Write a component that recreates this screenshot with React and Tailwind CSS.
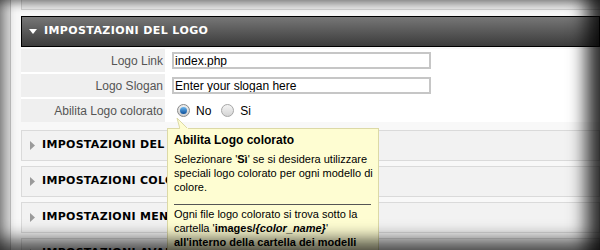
export default function App() {
  const label = "text-right pr-[2px] text-[12px] text-[#555] bg-[#efefef] w-[144px] shrink-0 flex items-center justify-end";
  const sections = ["IMPOSTAZIONI DEL LAYOUT", "IMPOSTAZIONI COLORE", "IMPOSTAZIONI MENU", "IMPOSTAZIONI AVANZATE"];

  return (
    <div className="relative w-[600px] h-[250px] overflow-hidden bg-[#e2e2e2] font-['Liberation_Sans',Arial,sans-serif]">
      <div className="ml-[10px] h-full border-l border-[#c6c6c6] bg-[#f8f8f8] pl-[10px]">
        <div className="h-[10px] bg-[#ececec] border-l border-b border-[#d2d2d2]" />

        <div className="mt-[6px] h-[31px] flex items-center gap-[7px] pl-[7px] border border-black bg-gradient-to-b from-[#777] to-[#3c3c3c]">
          <svg width="8" height="5" viewBox="0 0 8 5" className="fill-white">
            <path d="M0 0H8L4 5Z" />
          </svg>
          <span className="text-white font-bold text-[11px] tracking-[0.4px] font-['DejaVu_Sans',Verdana,sans-serif]">
            IMPOSTAZIONI DEL LOGO
          </span>
        </div>

        <div className="mt-[2px] flex flex-col gap-[2px] bg-white">
          <div className="flex h-[23px] items-center">
            <div className={label + " h-full"}>Logo Link</div>
            <input
              readOnly
              value="index.php"
              className="ml-[7px] w-[259px] h-[17px] border-2 border-[#c6c6c6] px-[1px] text-[12px] text-black outline-none"
            />
          </div>
          <div className="flex h-[23px] items-center">
            <div className={label + " h-full"}>Logo Slogan</div>
            <input
              readOnly
              value="Enter your slogan here"
              className="ml-[7px] w-[259px] h-[17px] border-2 border-[#c6c6c6] px-[1px] text-[12px] text-black outline-none"
            />
          </div>
          <div className="flex h-[23px] items-center">
            <div className={label + " h-full"}>Abilita Logo colorato</div>
            <div className="ml-[12px] flex items-center text-[12px] text-black">
              <span className="w-[13px] h-[13px] rounded-full border border-[#8a8a8a] bg-gradient-to-b from-[#eee] to-[#cfcfcf] flex items-center justify-center">
                <span className="w-[7px] h-[7px] rounded-full bg-gradient-to-b from-[#6bb8f0] to-[#0a4f9a]" />
              </span>
              <span className="ml-[6px]">No</span>
              <span className="ml-[10px] w-[13px] h-[13px] rounded-full border border-[#a6a6a6] bg-gradient-to-b from-[#f4f4f4] to-[#d4d4d4]" />
              <span className="ml-[6px]">Si</span>
            </div>
          </div>
        </div>

        <div className="mt-[8px] flex flex-col gap-[5px]">
          {sections.map((s) => (
            <div key={s} className="h-[31px] flex items-center gap-[7px] pl-[8px] bg-[#f2f2f2] border border-[#dadada]">
              <svg width="5" height="9" viewBox="0 0 5 9" className="fill-[#9a9a9a]">
                <path d="M0 0L5 4.5L0 9Z" />
              </svg>
              <span className="text-black font-bold text-[11px] tracking-[0.3px] font-['DejaVu_Sans',Verdana,sans-serif]">{s}</span>
            </div>
          ))}
        </div>
      </div>

      <div className="absolute left-[167px] top-[128px] w-[212px] h-[140px] bg-[#fefdd2] border border-[#dcd9a6] px-[6px] pt-[4px] text-[11px] leading-[14px] text-black whitespace-nowrap">
        <svg width="14" height="12" viewBox="0 0 14 12" className="absolute left-[7px] top-[-11px]">
          <path d="M2 0L13 11H5Z" fill="#fefdd2" stroke="#dcd9a6" />
          <path d="M5 11H13" stroke="#fefdd2" strokeWidth="2" />
        </svg>
        <div className="font-bold text-[12px]">Abilita Logo colorato</div>
        <div className="mt-[5px]">
          Selezionare '<b>Sì</b>' se si desidera utilizzare
          <br />
          speciali logo colorato per ogni modello di
          <br />
          colore.
        </div>
        <div className="mt-[10px] mb-[2px] mr-[1px] h-[1px] bg-[#555]" />
        <div>
          Ogni file logo colorato si trova sotto la
          <br />
          cartella '<b>images/</b><b><i>{"{color_name}"}</i></b>'
          <br />
          <b>all'interno della cartella dei modelli</b>
        </div>
      </div>

      <div className="pointer-events-none absolute inset-0 shadow-[inset_0_10px_10px_-6px_rgba(0,0,0,0.35),inset_12px_0_12px_-6px_rgba(0,0,0,0.35),inset_-24px_0_18px_-10px_rgba(0,0,0,0.8),inset_0_-20px_16px_-8px_rgba(0,0,0,0.6)]" />
    </div>
  );
}
